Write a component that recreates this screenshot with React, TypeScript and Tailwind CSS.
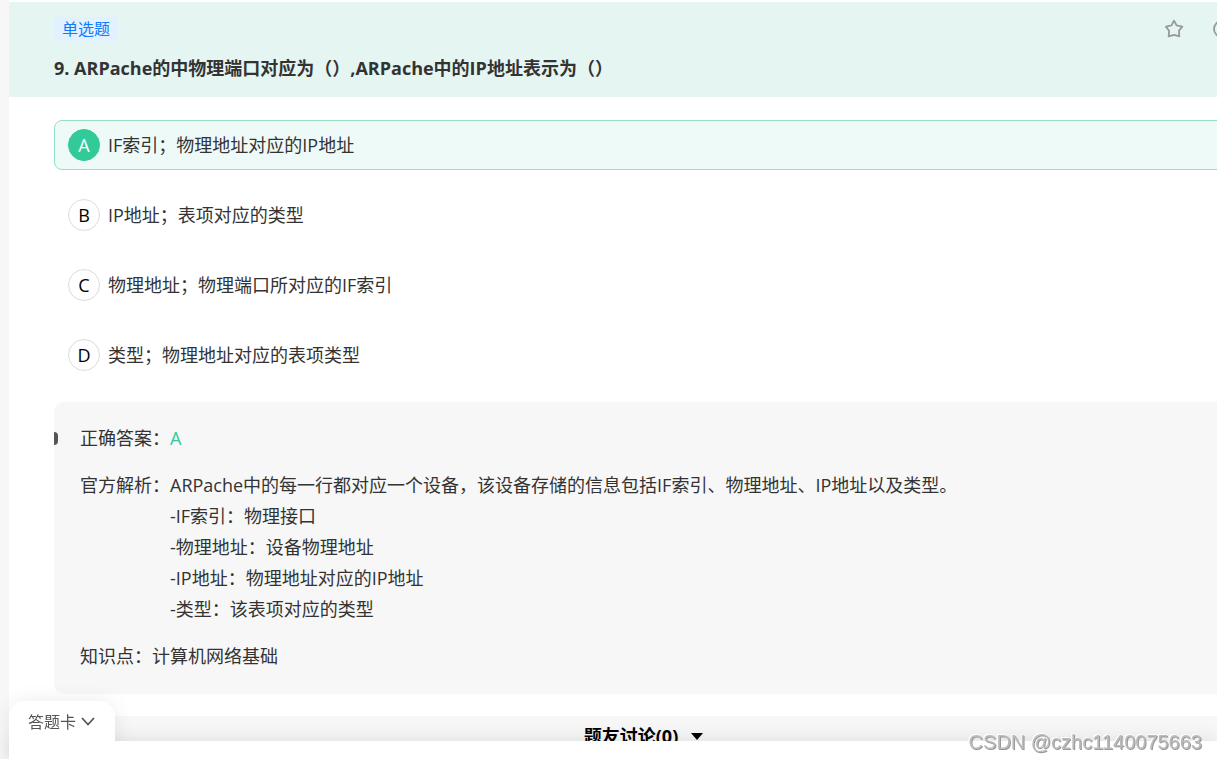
import React, { useState } from 'react';

interface Option {
  key: string;
  text: string;
}

const options: Option[] = [
  { key: 'A', text: 'IF索引；物理地址对应的IP地址' },
  { key: 'B', text: 'IP地址；表项对应的类型' },
  { key: 'C', text: '物理地址；物理端口所对应的IF索引' },
  { key: 'D', text: '类型；物理地址对应的表项类型' },
];

const analysis = [
  'ARPache中的每一行都对应一个设备，该设备存储的信息包括IF索引、物理地址、IP地址以及类型。',
  '-IF索引：物理接口',
  '-物理地址：设备物理地址',
  '-IP地址：物理地址对应的IP地址',
  '-类型：该表项对应的类型',
];

function StarIcon() {
  return (
    <svg className="h-5 w-5" viewBox="0 0 20 20" fill="none" stroke="#999999" strokeWidth="1.8" strokeLinejoin="round">
      <path d="M9 1.7l2.6 4.7 5.7 1.2-3.4 4.2.4 5.6-5.3-1.5-5.3 1.5.4-5.6L.9 7.600l5.600-1.200z" />
    </svg>
  );
}

function InfoIcon() {
  return (
    <svg className="h-5 w-5" viewBox="0 0 20 20" fill="none" stroke="#999999" strokeWidth="1.8">
      <circle cx="9" cy="10" r="8" />
      <path d="M9 9v5M9 5.5v1.5" />
    </svg>
  );
}

function QuestionHeader() {
  return (
    <header className="bg-[#e5f5f2] px-[45px] pt-[15px] pb-[13px]">
      <div className="flex items-center justify-between">
        <span className="rounded bg-[#e1f1ff] px-2 text-base leading-6 text-[#0f7bff]">单选题</span>
        <div className="flex gap-7">
          <button type="button" aria-label="收藏">
            <StarIcon />
          </button>
          <button type="button" aria-label="反馈">
            <InfoIcon />
          </button>
        </div>
      </div>
      <h1 className="mt-3 text-lg leading-[31px] font-bold">
        9. ARPache的中物理端口对应为（）,ARPache中的IP地址表示为（）
      </h1>
    </header>
  );
}

function OptionList() {
  const [selected, setSelected] = useState('A');

  return (
    <div className="flex flex-col gap-5">
      {options.map((option) => {
        const active = option.key === selected;
        return (
          <label
            key={option.key}
            className={`relative flex cursor-pointer items-center gap-2 rounded-lg border px-[13px] py-2 text-lg leading-8 ${
              active ? 'border-[#91e1c8] bg-[#edfaf7]' : 'border-transparent'
            }`}
          >
            <input
              type="radio"
              name="answer"
              value={option.key}
              checked={active}
              onChange={() => setSelected(option.key)}
              className="sr-only"
            />
            <span
              className={`flex h-8 w-8 items-center justify-center rounded-full border ${
                active ? 'border-[#32ca99] bg-[#32ca99] text-white' : 'border-[#dddddd] bg-white text-black'
              }`}
            >
              {option.key}
            </span>
            <span>{option.text}</span>
          </label>
        );
      })}
    </div>
  );
}

function AnswerPanel() {
  return (
    <section className="mt-[22px] flex flex-col gap-4 overflow-hidden rounded-[10px] bg-[#f7f7f7] pt-[21px] pb-[22px] text-lg leading-[31px]">
      <div className="flex items-center">
        <span className="h-[13px] w-1 rounded-r bg-[#555555]" />
        <span className="pl-[22px]">正确答案：</span>
        <span className="text-[#32ca99]">A</span>
      </div>
      <div className="flex pl-[26px]">
        <span className="shrink-0">官方解析：</span>
        <div>
          {analysis.map((line) => (
            <p key={line}>{line}</p>
          ))}
        </div>
      </div>
      <div className="pl-[26px]">知识点：计算机网络基础</div>
    </section>
  );
}

function AnswerCardBar() {
  return (
    <div className="fixed right-0 bottom-0 left-[9px] h-[18px] bg-white shadow-[0_0_20px_rgba(0,0,0,0.12)]">
      <button
        type="button"
        className="absolute bottom-0 left-0 flex h-[58px] w-[106px] items-start gap-1 rounded-t-2xl bg-white pt-[9px] pl-[19px] text-base leading-6 text-[#555555] shadow-[0_0_20px_rgba(0,0,0,0.08)]"
      >
        答题卡
        <svg className="mt-1 h-4 w-4" viewBox="0 0 16 16" fill="none" stroke="#555555" strokeWidth="1.8">
          <path d="M2 4l6 6.500L14 4" />
        </svg>
      </button>
      {/* keeps the tab's shadow off the bar */}
      <div className="absolute inset-0 bg-white" />
    </div>
  );
}

export default function App() {
  return (
    <div className="min-h-screen overflow-hidden bg-[#f7f7f7] pl-[9px] font-['Open_Sans','Noto_Sans_CJK_SC',sans-serif] text-[#333333]">
      {/* the paper is wider than the window and runs off to the right */}
      <main className="-mr-[61px]">
        <div className="border-t-2 border-white bg-white">
          <QuestionHeader />
          <div className="px-[45px] pt-[23px] pb-[22px]">
            <OptionList />
            <AnswerPanel />
          </div>
        </div>
        <section className="flex items-center justify-center gap-[13px] pt-1 text-lg leading-8 font-bold text-black">
          <h2>题友讨论(0)</h2>
          <svg className="h-[7px] w-3" viewBox="0 0 12 7">
            <path d="M0 0h12L6 7z" />
          </svg>
        </section>
      </main>
      <AnswerCardBar />
      <div className="pointer-events-none fixed right-[15px] bottom-[5px] font-['Liberation_Sans',sans-serif] text-xl leading-6 text-[#bbbbbb] [text-shadow:1px_1px_0_#999999,-1px_-1px_0_#ffffff]">
        CSDN @czhc1140075663
      </div>
    </div>
  );
}
